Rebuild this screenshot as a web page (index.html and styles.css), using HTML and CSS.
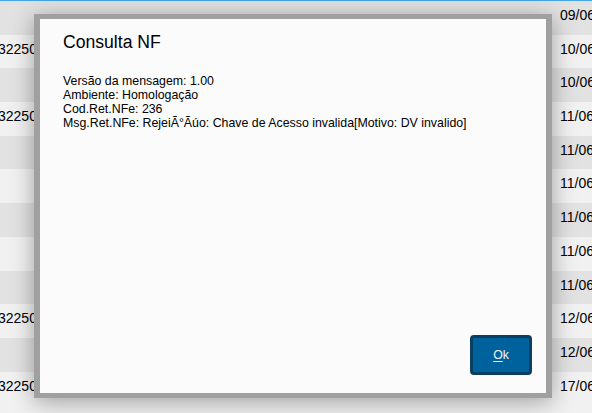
FILE: index.html
```html
<!DOCTYPE html>
<html lang="pt">
<head>
<meta charset="utf-8">
<title>Consulta NF</title>
<link rel="stylesheet" href="styles.css">
</head>
<body>
<div class="topline"></div>
<div class="list">
  <div class="row dark"><span class="num"></span><span class="date">09/06</span></div>
  <div class="row light"><span class="num">32250</span><span class="date">10/06</span></div>
  <div class="row dark"><span class="num"></span><span class="date">10/06</span></div>
  <div class="row light"><span class="num">32250</span><span class="date">11/06</span></div>
  <div class="row dark"><span class="num"></span><span class="date">11/06</span></div>
  <div class="row light"><span class="num"></span><span class="date">11/06</span></div>
  <div class="row dark"><span class="num"></span><span class="date">11/06</span></div>
  <div class="row light"><span class="num"></span><span class="date">11/06</span></div>
  <div class="row dark"><span class="num"></span><span class="date">11/06</span></div>
  <div class="row light"><span class="num">32250</span><span class="date">12/06</span></div>
  <div class="row dark"><span class="num"></span><span class="date">12/06</span></div>
  <div class="row light"><span class="num">32250</span><span class="date">17/06</span></div>
</div>

<div class="dialog">
  <h1 class="title">Consulta NF</h1>
  <div class="message">
    <div>Versão da mensagem: 1.00</div>
    <div>Ambiente: Homologação</div>
    <div>Cod.Ret.NFe: 236</div>
    <div>Msg.Ret.NFe: RejeiÃ°Ãúo: Chave de Acesso invalida[Motivo: DV invalido]</div>
  </div>
  <div class="actions">
    <button class="ok"><u>O</u>k</button>
  </div>
</div>
</body>
</html>
```
FILE: styles.css
```css
html, body {
  margin: 0;
  padding: 0;
}
body {
  width: 592px;
  height: 413px;
  overflow: hidden;
  background: #f1f1f1;
  font-family: "Liberation Sans", Arial, sans-serif;
  color: #000;
  position: relative;
}
.topline {
  height: 2px;
  background: #41a6ee;
}
.list {
  display: flex;
  flex-direction: column;
  margin-top: -1px;
}
.row {
  height: 33.7px;
  flex: none;
  display: flex;
  align-items: flex-start;
  justify-content: space-between;
  box-sizing: border-box;
  padding-top: 6px;
  font-size: 14px;
  line-height: 16px;
}
.row.dark { background: #e2e2e2; }
.row.light { background: #f1f1f1; }
.num {
  margin-left: -2px;
  width: 60px;
}
.date {
  width: 32px;
  white-space: nowrap;
}

.dialog {
  position: absolute;
  left: 34px;
  top: 14px;
  width: 518px;
  height: 384px;
  box-sizing: border-box;
  border-style: solid;
  border-color: #a0a0a0;
  border-width: 5px 6px;
  background: #fbfbfb;
  box-shadow: 0 4px 22px rgba(0, 0, 0, 0.34);
  padding: 13px 14px 18px 23px;
  display: flex;
  flex-direction: column;
}
.title {
  margin: 0;
  font-size: 17.6px;
  line-height: 20px;
  font-weight: normal;
}
.message {
  margin-top: 22px;
  font-size: 12.35px;
  line-height: 14px;
  flex: 1;
}
.actions {
  display: flex;
  justify-content: flex-end;
}
.ok {
  width: 62px;
  height: 40px;
  box-sizing: border-box;
  border: 3px solid #0b3f60;
  border-radius: 4px;
  background: #00629c;
  color: #f2f6f9;
  font-family: "Liberation Sans", Arial, sans-serif;
  font-size: 12.3px;
  padding: 0;
  cursor: pointer;
}
.ok u {
  text-decoration-thickness: 1px;
  text-underline-offset: 2px;
}
```
